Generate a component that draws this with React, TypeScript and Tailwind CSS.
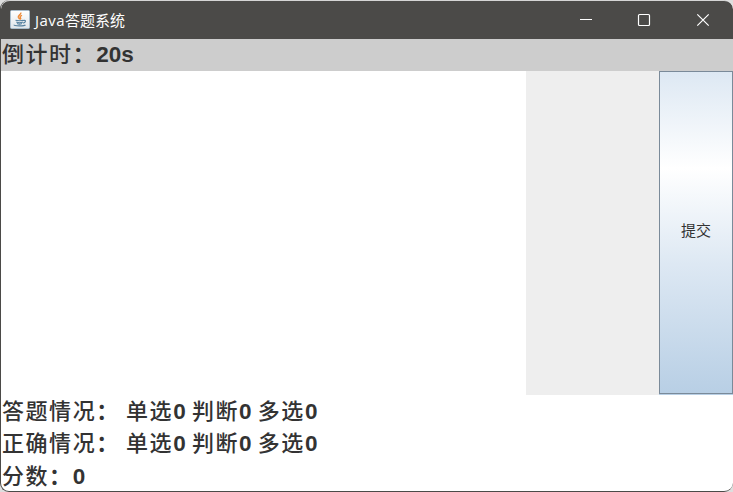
import type { ReactNode } from 'react';

function Han({ children }: { children: ReactNode }) {
  return (
    <span className="font-['Noto_Sans_CJK_SC',sans-serif] text-[22px] font-medium tracking-[1.55px]">
      {children}
    </span>
  );
}

function Colon() {
  return (
    <span className="font-['Noto_Sans_CJK_SC',sans-serif] text-[22px] font-bold tracking-[1.55px]">：</span>
  );
}

function Line({ children, className = '' }: { children: ReactNode; className?: string }) {
  return (
    <div
      className={`flex h-8 shrink-0 items-baseline whitespace-pre pl-px font-['Liberation_Sans',sans-serif] text-[22.5px] leading-6 font-bold text-[#333333] ${className}`}
    >
      {children}
    </div>
  );
}

function JavaIcon() {
  return (
    <svg className="h-5 w-5 shrink-0" viewBox="0 0 20 20" fill="none">
      <defs>
        <linearGradient id="tile" x1="0" y1="0" x2="0" y2="1">
          <stop offset="0" stopColor="#ffffff" />
          <stop offset="1" stopColor="#dfe5ea" />
        </linearGradient>
      </defs>
      <rect x="0.5" y="0.5" width="19" height="18" rx="1" fill="url(#tile)" stroke="#a9bdcc" />
      <path d="M10.8 2.500c.8 2-3.200 2.700-2.500 4.800.3.800 1.200 1.200 1.400 2M12 5.300c-2 .9-2.300 1.500-1.500 2.500.5.700.1 1.300-.3 1.600" stroke="#ed8b3a" strokeWidth="1.4" />
      <path d="M5.500 10.300c1.500.6 6.500.6 8 0M6.300 12c1.500.7 5 .7 6.600 0M7 13.500c1.300.6 3.800.6 5 0M13.500 10.500c2.800-.8 2.500 2-.3 2.700M4 14.800c0 1.400 10.500 1.500 11.500 0" stroke="#55809f" strokeWidth="1.2" />
    </svg>
  );
}

function Stats({ label }: { label: string }) {
  return (
    <Line className="pt-0.5">
      <Han>{label}</Han>
      <Colon />
      <span> </span>
      <Han>单选</Han>
      <span>0 </span>
      <Han>判断</Han>
      <span>0 </span>
      <Han>多选</Han>
      <span>0</span>
    </Line>
  );
}

export default function App() {
  return (
    <div className="h-[492px] w-[733px] overflow-hidden bg-[#dedede]">
      <div className="flex h-full flex-col overflow-hidden rounded-[9px] border-b border-l border-[#4b4a48] bg-white">
        <header className="flex h-[39px] shrink-0 items-center rounded-t-[9px] border-t border-[#d5d5d5] bg-[#4b4a48] pl-[9px] text-white">
          <JavaIcon />
          <div className="ml-[5px] flex flex-1 items-baseline leading-5">
            <span className="font-['Open_Sans',sans-serif] text-[15px] tracking-[0.45px]">Java</span>
            <span className="font-['Noto_Sans_CJK_SC',sans-serif] text-[15px]">答题系统</span>
          </div>
          <svg className="h-[38px] w-[173px]" viewBox="560 1 173 38" fill="none" stroke="white">
            <path d="M580 19.500h12" />
            <rect x="638.500" y="14.500" width="11" height="11" rx="1" strokeWidth="1.200" />
            <path d="M697.300 14.300l11.400 11.400M708.700 14.300l-11.400 11.400" strokeWidth="1.200" />
          </svg>
        </header>
        <Line className="bg-[#cdcdcd] pt-px">
          <Han>倒计时</Han>
          <Colon />
          <span>20s</span>
        </Line>
        <main className="flex h-[324px] shrink-0">
          <div className="w-[525px] bg-white" />
          <div className="flex-1 bg-[#eeeeee]" />
          <div className="w-[74px] border-b border-[#b8cfe5]">
            <button className="h-full w-full border border-[#7a8a99] bg-[linear-gradient(to_bottom,#dde8f3_0%,#ffffff_30%,#dde8f3_60%,#b8cfe5_100%)] pb-1 font-['Noto_Sans_CJK_SC',sans-serif] text-[15px] text-[#333333]">
              提交
            </button>
          </div>
        </main>
        <footer className="flex flex-col">
          <Stats label="答题情况" />
          <Stats label="正确情况" />
          <Line className="pt-[3px]">
            <Han>分数</Han>
            <Colon />
            <span>0</span>
          </Line>
        </footer>
      </div>
    </div>
  );
}
